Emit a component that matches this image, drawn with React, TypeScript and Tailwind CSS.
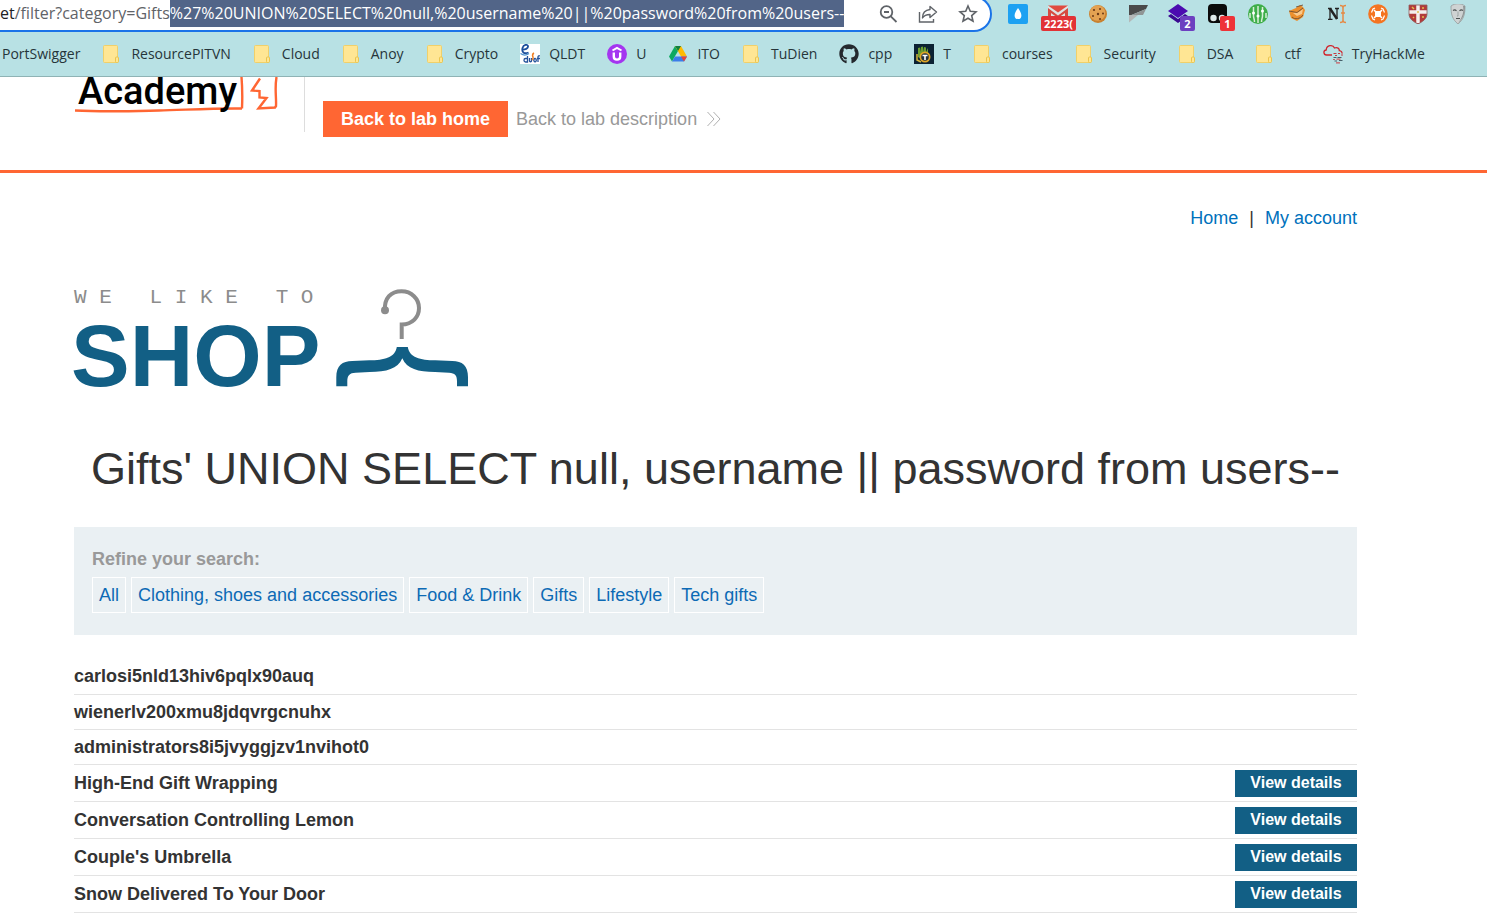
import { useEffect, useRef, type ReactNode } from "react";
import { FaGithub } from "react-icons/fa";

const PATH = "/filter?category=Gifts";
const QUERY = "%27%20UNION%20SELECT%20null,%20username%20||%20password%20from%20users--";

function FolderIcon() {
  return (
    <svg viewBox="0 0 20 20" className="size-5 shrink-0">
      <rect x="1.5" y="1.5" width="14" height="17" rx="1" fill="#ffe694" stroke="#f0d06a" />
      <rect x="13.5" y="13" width="3" height="5.5" rx="1" fill="#ffe694" stroke="#eac54e" />
    </svg>
  );
}

function QldtIcon() {
  return (
    <svg viewBox="0 0 20 20" className="size-5 shrink-0">
      <rect width="20" height="20" fill="#fff" />
      <path d="M1.5 5.5C5 6 8.500 4.500 8 2 7.500 0 3.500.5 2.500 4 1.500 8 4 10.500 8.500 8.500" fill="none" stroke="#1c4f9c" strokeWidth="1.800" />
      <path d="M.5 9.500C4 12 7 11 9 9.500" fill="none" stroke="#4f93cf" strokeWidth="1.200" />
      <path d="M7.500 12v6H5.500c-2 0-2-3.500 0-3.500h2M9.500 14v3c0 1 2 1 2 0v-3M15 14.500a1.200 1.700 0 1 0 .1 0M18 18v-5c0-1 1-1.500 2-1M17 14.500h3" fill="none" stroke="#25539b" strokeWidth="1.300" />
      <path d="M14 9c-2 1-1.500 3-1 4s0 2-1 3" fill="none" stroke="#ef7d22" strokeWidth="1.500" />
    </svg>
  );
}

function UdemyIcon() {
  return (
    <svg viewBox="0 0 20 20" className="size-5 shrink-0">
      <circle cx="10" cy="10" r="10" fill="#a435f0" />
      <path d="M5.500 6.500 10 3.800l4.500 2.700" fill="none" stroke="#fff" strokeWidth="2" />
      <path d="M6.800 8.500v4c0 4.200 6.400 4.200 6.400 0v-4" fill="none" stroke="#fff" strokeWidth="2.400" />
    </svg>
  );
}

function DriveIcon() {
  return (
    <svg viewBox="0 0 20 20" className="size-5 shrink-0">
      <path d="M7 2 1 12.500l3 5L10 7z" fill="#0da960" />
      <path d="M7 2h6l6 10.500h-6z" fill="#ffba00" />
      <path d="M7 12.500h12l-3 5H4z" fill="#3b7de9" />
      <path d="M13 12.500h6l-3 5z" fill="#ea4335" />
      <path d="M7 2h6l-3 5z" fill="#11803f" />
    </svg>
  );
}

function BadgeTIcon() {
  return (
    <svg viewBox="0 0 20 20" className="size-5 shrink-0">
      <rect width="20" height="20" fill="#0c2233" />
      <path d="M4 9V4l2-.5V8l1-5 2-.5V8l1-5 2 .5V8l2-4v7l-5 5-5-3z" fill="#6b9e2f" />
      <circle cx="11" cy="13" r="5.500" fill="#e0a526" />
      <circle cx="11" cy="13" r="3.800" fill="#26343c" />
      <path d="M8.500 11.500h5M11 11.500v4.500" stroke="#fff" strokeWidth="1.600" />
      <path d="M3 10v6l4 2" fill="none" stroke="#d6b43a" strokeWidth="1.500" />
    </svg>
  );
}

function CloudIcon() {
  return (
    <svg viewBox="0 0 20 20" className="size-5 shrink-0">
      <path d="M9 11H3.500C.5 11-.2 6.500 3.200 6 3.500 1 10 .2 11.500 4c3-1 5 .5 4.800 2.600 2 .2 2.900 1.400 2.700 3" fill="none" stroke="#d0242c" strokeWidth="1.300" />
      <path d="M10.500 9.500h3M15 9.500h2M18 11h2M12 11.500h2" stroke="#c43a40" strokeWidth="1.200" />
      <path d="M10.500 13.500h3M14.500 13.500h4M11.500 17h2.500M16 16.500h3.500" stroke="#46606a" strokeWidth="1.200" />
      <path d="M10 15.500h2M13.500 15.200h4M13 18.800h4" stroke="#c95a60" strokeWidth="1.200" />
    </svg>
  );
}

type Bookmark = { label: string; icon?: ReactNode };

const bookmarks: Bookmark[] = [
  { label: "PortSwigger" },
  { label: "ResourcePITVN", icon: <FolderIcon /> },
  { label: "Cloud", icon: <FolderIcon /> },
  { label: "Anoy", icon: <FolderIcon /> },
  { label: "Crypto", icon: <FolderIcon /> },
  { label: "QLDT", icon: <QldtIcon /> },
  { label: "U", icon: <UdemyIcon /> },
  { label: "ITO", icon: <DriveIcon /> },
  { label: "TuDien", icon: <FolderIcon /> },
  { label: "cpp", icon: <FaGithub className="size-5 shrink-0 text-[#24292e]" /> },
  { label: "T", icon: <BadgeTIcon /> },
  { label: "courses", icon: <FolderIcon /> },
  { label: "Security", icon: <FolderIcon /> },
  { label: "DSA", icon: <FolderIcon /> },
  { label: "ctf", icon: <FolderIcon /> },
  { label: "TryHackMe", icon: <CloudIcon /> },
];

type Extension = { name: string; icon: ReactNode; badge?: string; badgeClass?: string };

const extensions: Extension[] = [
  {
    name: "Water drop",
    icon: (
      <>
        <rect width="20" height="20" rx="2" fill="#1da1f2" />
        <path d="M10 4c2 3 3.400 5 3.400 7.400a3.400 3.600 0 0 1-6.800 0C6.600 9 8 7 10 4z" fill="#fff" />
      </>
    ),
  },
  {
    name: "Mail",
    badge: "2223(",
    badgeClass: "left-[3px] w-[35px] bg-[#e23236]",
    icon: (
      <>
        <path d="M0 2h20v12H0z" fill="#dfe3e3" />
        <path d="M0 1.500h20L10 8.500z" fill="#e04a3f" />
        <path d="M0 4 10 11.500 20 4v10h-3V9l-7 5-7-5v5H0z" fill="#d64a40" />
      </>
    ),
  },
  {
    name: "Cookie",
    icon: (
      <>
        <circle cx="10" cy="10" r="9" fill="#c9812f" />
        <circle cx="9.500" cy="9" r="7.800" fill="#e3a252" />
        <g fill="#6b3a17">
          <circle cx="6" cy="6" r="1.100" />
          <circle cx="12" cy="5" r="1" />
          <circle cx="10" cy="10" r="1.200" />
          <circle cx="15" cy="9.500" r="1" />
          <circle cx="5" cy="12" r="1" />
          <circle cx="12" cy="15" r="1.100" />
        </g>
      </>
    ),
  },
  {
    name: "Flag",
    icon: (
      <>
        <path d="M1 1h19l-2 4L1 12z" fill="#4a4a4a" />
        <path d="M1 12 18 5l-3 6H5z" fill="#909595" />
        <path d="M1 11h9l-9 7.500z" fill="#b4b8b8" />
      </>
    ),
  },
  {
    name: "Layers",
    badge: "2",
    badgeClass: "left-[22px] w-[15px] bg-[#6d3fc0]",
    icon: (
      <>
        <path d="M10 0l10 7-10 7L0 7z" fill="#4b0bb0" />
        <path d="M0 12l3-2 7 5 7-5 3 2-10 7z" fill="#3a0891" />
      </>
    ),
  },
  {
    name: "Scripts",
    badge: "1",
    badgeClass: "left-[22px] w-[15px] bg-[#ee3338]",
    icon: (
      <>
        <rect x="0" y="0" width="19" height="19" rx="4" fill="#0b0b0b" />
        <circle cx="5.500" cy="14" r="3.200" fill="#dfe8e8" />
        <circle cx="14" cy="14" r="3.200" fill="#dfe8e8" />
      </>
    ),
  },
  {
    name: "Proxy",
    icon: (
      <>
        <circle cx="10" cy="10" r="10" fill="#3fae49" />
        <path d="M5.500 3v9c0 2 1 3 1 6M10 2v17M14.500 3v9c0 2-1 3-1 6M2 9v5M18 9v5" fill="none" stroke="#d7f0d8" strokeWidth="1.500" />
        <circle cx="5.500" cy="9" r="1.500" fill="#fff" />
        <circle cx="10" cy="12" r="1.500" fill="#fff" />
        <circle cx="14.500" cy="7" r="1.500" fill="#fff" />
      </>
    ),
  },
  {
    name: "Fox",
    icon: (
      <>
        <path d="M1 7l7-3 4-3 3 2 2 3-2 7-6 4-6-3z" fill="#ec8f2d" />
        <path d="M5 9l5-.500 5-3.500-1 5-5 2z" fill="#f9c98c" />
        <path d="M1 7l8 1.500 6-4.500M8 3l7-2M4 13c3 3 8 2 11-2" fill="none" stroke="#6f5034" strokeWidth=".9" />
      </>
    ),
  },
  {
    name: "Text cursor",
    icon: (
      <>
        <path d="M0 4.500h3.500M7 4.500h4M0 15.300h4.500M2 4.500v10.500M9 4.500v10.500" fill="none" stroke="#222" strokeWidth="1.300" />
        <path d="M2 4.500 9 15" fill="none" stroke="#222" strokeWidth="2.400" />
        <path d="M12 1.500c2 0 3 .5 3 2v13c0 1-1 2-3 2M18 1.500c-2 0-3 .5-3 2v13c0 1 1 2 3 2M13 9h4" fill="none" stroke="#e58a45" strokeWidth="1.500" />
      </>
    ),
  },
  {
    name: "Target",
    icon: (
      <>
        <circle cx="10" cy="10" r="9.800" fill="#f47421" />
        <rect x="7" y="7" width="6" height="6" rx="1" fill="#fff" />
        <path d="M6 6l8 8M14 6l-8 8" stroke="#fff" strokeWidth="1.600" />
        <path d="M3.500 8.500 5 5l2-1M13 4l2 1 1.500 3.500M16.500 11.500 15 15l-2 1M7 16l-2-1-1.500-3.500" fill="none" stroke="#fff" strokeWidth="1.200" />
      </>
    ),
  },
  {
    name: "Shield",
    icon: (
      <>
        <path d="M1 1h18v9c0 5-5 8-9 10-4-2-9-5-9-10z" fill="#b23b3b" />
        <path d="M10 1v18M1 8h18" stroke="#f4eeee" strokeWidth="3.500" />
        <path d="M4 3l2 2M14 4h2M5 13l1 1M14 13h2M9 8h2" stroke="#e3c04e" strokeWidth="1.500" />
        <path d="M1 1h18v9c0 5-5 8-9 10-4-2-9-5-9-10z" fill="none" stroke="#8f5a5a" strokeWidth=".8" />
      </>
    ),
  },
  {
    name: "Mask",
    icon: (
      <>
        <path d="M3 2c4-3 10-3 14 0 0 8-1 13-7 18C4 15 3 10 3 2z" fill="#cfd3d3" stroke="#969b9b" strokeWidth=".8" />
        <path d="M15 2c1 5 0 11-5 17 5-4 7-9 7-17z" fill="#8f9595" />
        <path d="M5 6.500c1-.7 2.500-.7 3.500.3M11.500 6.800c1-1 2.500-1 3.500-.3M8 14.500h4" fill="none" stroke="#4c5252" strokeWidth="1.100" />
        <path d="M10 7.500V12H9" fill="none" stroke="#9aa0a0" strokeWidth=".9" />
      </>
    ),
  },
];

function AddressBar() {
  const input = useRef<HTMLInputElement>(null);

  useEffect(() => {
    input.current?.focus();
    input.current?.setSelectionRange(PATH.length, PATH.length + QUERY.length);
  }, []);

  return (
    <div className="-mt-1 flex h-9 min-w-0 flex-1 items-start rounded-r-full border-y-2 border-r-2 border-[#1a73e8] bg-white pt-0.5 pr-3 text-[#5f6368]">
      <span className="h-[27px] shrink-0 text-[16px] leading-[27px] text-[#202124]">et</span>
      <input
        ref={input}
        aria-label="Address"
        defaultValue={PATH + QUERY}
        spellCheck={false}
        className="h-[27px] min-w-0 flex-1 text-[16px] leading-[27px] outline-none selection:bg-[#526588] selection:text-white"
      />
      <div className="flex h-[27px] shrink-0 items-center gap-5 pl-3">
        <button aria-label="Zoom" className="size-5">
          <svg viewBox="0 0 20 20" fill="none" stroke="currentColor" strokeWidth="1.800">
            <circle cx="8.500" cy="8" r="5.800" />
            <path d="M12.800 12.300 18.500 18M6 8h5" />
          </svg>
        </button>
        <button aria-label="Share" className="size-5">
          <svg viewBox="0 0 20 20" fill="none" stroke="currentColor" strokeWidth="1.400">
            <path d="M1.500 8v10h14v-3" />
            <path d="M12 2.500 18.500 8 12 13.500V10.500c-4 0-6 1-7.500 3.500 0-4.500 2.500-8 7.500-8.500z" strokeLinejoin="round" />
          </svg>
        </button>
        <button aria-label="Bookmark this page" className="size-5">
          <svg viewBox="0 0 20 20" fill="none" stroke="currentColor" strokeWidth="1.600">
            <path d="m10 2 2.300 5.300 5.700.5-4.300 3.800 1.300 5.600-5-3-5 3 1.300-5.600L2 7.800l5.700-.5z" />
          </svg>
        </button>
      </div>
    </div>
  );
}

function BrowserChrome() {
  return (
    <div className="h-[77px] overflow-hidden border-b border-[#8fb3b5] bg-[#b8e1e4] font-['Open_Sans','Noto_Sans',sans-serif]">
      <div className="flex h-8 gap-[6px] pr-[9px]">
        <AddressBar />
        <div className="flex shrink-0">
          {extensions.map((e) => (
            <button key={e.name} aria-label={e.name} className="relative flex h-7 w-10 items-center justify-center">
              <svg viewBox="0 0 20 20" className="size-5">
                {e.icon}
              </svg>
              {e.badge && (
                <span className={`absolute top-4 h-[15px] overflow-hidden rounded-xs text-center text-[11px] leading-[15px] font-bold text-white ${e.badgeClass}`}>
                  {e.badge}
                </span>
              )}
            </button>
          ))}
        </div>
      </div>
      <nav className="flex h-[43px] items-center gap-[22px] pl-0.5 text-[14px] text-[#26353a]">
        {bookmarks.map((b) => (
          <a key={b.label} href="#" className="flex shrink-0 items-center gap-[9px]">
            {b.icon}
            {b.label}
          </a>
        ))}
      </nav>
    </div>
  );
}

function LabHeader() {
  return (
    <header className="flex h-24 items-start overflow-hidden border-b-3 border-[#ff6633] pl-[75px]">
      <a href="#" className="relative h-10 w-[205px] shrink-0">
        <svg viewBox="0 0 205 40" className="absolute inset-0" fill="none" stroke="#ff6633" strokeWidth="2.400">
          <path d="M0 33.500c30 1.500 60 .5 84 0s55-2.500 83-2" />
          <path d="M166.500 0c1 12 1 20 .500 31.500M201.500 0c-2 12 0 20-.5 29l-1 1.500-16.500 1 8-10.500-7-.5v-6.500l-7.500-.5 8-12" />
        </svg>
        <span className="relative -mt-1.5 block pl-[3px] font-['Roboto',sans-serif] text-[38px] leading-10 font-medium text-black">Academy</span>
      </a>
      <div className="ml-6 flex h-[55px] items-start border-l border-[#dddddd] pt-6 pl-[18px] text-[18px]">
        <a href="#" className="flex h-9 items-center bg-[#ff6633] px-[18px] font-bold text-white">
          Back to lab home
        </a>
        <a href="#" className="ml-2 flex h-9 items-center gap-[10px] text-[#999999]">
          Back to lab description
          <svg viewBox="0 0 14 16" className="h-4 w-[14px]" fill="none" stroke="#b0b0b0">
            <path d="m.5 1 6.500 7-6.500 7M6.500 1l6.500 7-6.500 7" />
          </svg>
        </a>
      </div>
    </header>
  );
}

function ShopLogo() {
  return (
    <div className="flex items-start">
      <div className="w-[262px]">
        <p className="font-['Liberation_Mono',monospace] text-[21px] leading-6 whitespace-pre text-[#8c8c8c]">W E   L I K E   T O</p>
        <p className="-ml-[3px] pt-[10px] text-[88px] leading-[72px] font-bold text-[#125f85]">SHOP</p>
      </div>
      <svg viewBox="336 288 133 100" className="mt-0.5 h-[100px] w-[133px]">
        <path d="M385 310.500C384 298 391 291.300 401.500 291.300c10 0 17.500 7.500 17.500 16.700 0 9-6.500 16.300-17.300 16.500V339" fill="none" stroke="#8c8c8c" strokeWidth="4" />
        <circle cx="385" cy="310.300" r="4" fill="#8c8c8c" />
        <path
          d="M336.300 386.300v-9c0-12 6-16 16-16.300l17-.7c15 0 26-3 27.500-13.300h11c1.500 10.300 12.500 13.300 27.500 13.300l17 .7c10 .3 15.700 4.300 15.700 16.300v9h-11v-5c0-6-2-8.300-8-8.600l-14-.7c-17 0-28-3-32.700-13.700-4.700 10.700-15.700 13.700-32.700 13.700l-14 .7c-6 .3-8.300 2.600-8.300 8.600v5z"
          fill="#125f85"
        />
      </svg>
    </div>
  );
}

const categories = ["All", "Clothing, shoes and accessories", "Food & Drink", "Gifts", "Lifestyle", "Tech gifts"];
const credentials = ["carlosi5nld13hiv6pqlx90auq", "wienerlv200xmu8jdqvrgcnuhx", "administrators8i5jvyggjzv1nvihot0"];
const products = ["High-End Gift Wrapping", "Conversation Controlling Lemon", "Couple's Umbrella", "Snow Delivered To Your Door"];

export default function App() {
  return (
    <div className="bg-white font-['Liberation_Sans',Arial,sans-serif] text-[#333333]">
      <BrowserChrome />
      <LabHeader />
      <main className="pr-[130px] pb-2 pl-[74px] text-[18px]">
        <nav className="flex justify-end gap-[11px] pt-8 leading-[26px] text-[#0071bc]">
          <a href="#">Home</a>
          <span className="text-[#333333]">|</span>
          <a href="#">My account</a>
        </nav>
        <div className="h-[160px] pt-[55px]">
          <ShopLogo />
        </div>
        <h1 className="pt-[50px] text-center text-[45px] leading-[56px]">Gifts' UNION SELECT null, username || password from users--</h1>
        <section className="mt-[30px] h-[108px] bg-[#eaf0f3] px-[18px] pt-[19px]">
          <h2 className="leading-[26px] font-bold text-[#999999]">Refine your search:</h2>
          <div className="mt-[5px] flex gap-[5px]">
            {categories.map((c) => (
              <a key={c} href="#" className="flex h-9 items-center border border-white px-[6px] text-[#0d6ab5]">
                {c}
              </a>
            ))}
          </div>
        </section>
        <table className="mt-6 w-full border-collapse text-left">
          <tbody>
            {credentials.map((c) => (
              <tr key={c} className="h-[35px] border-b border-[#e3e3e3]">
                <th colSpan={2} scope="row" className="p-0 leading-6 font-bold">
                  {c}
                </th>
              </tr>
            ))}
            {products.map((p) => (
              <tr key={p} className="h-[37px] border-b border-[#e3e3e3]">
                <th scope="row" className="p-0 leading-6 font-bold">
                  {p}
                </th>
                <td className="w-[122px] p-0 pt-0.5">
                  <a href="#" className="flex h-[27px] items-center justify-center bg-[#125f85] pb-0.5 text-[16px] font-bold text-white">
                    View details
                  </a>
                </td>
              </tr>
            ))}
          </tbody>
        </table>
      </main>
    </div>
  );
}
